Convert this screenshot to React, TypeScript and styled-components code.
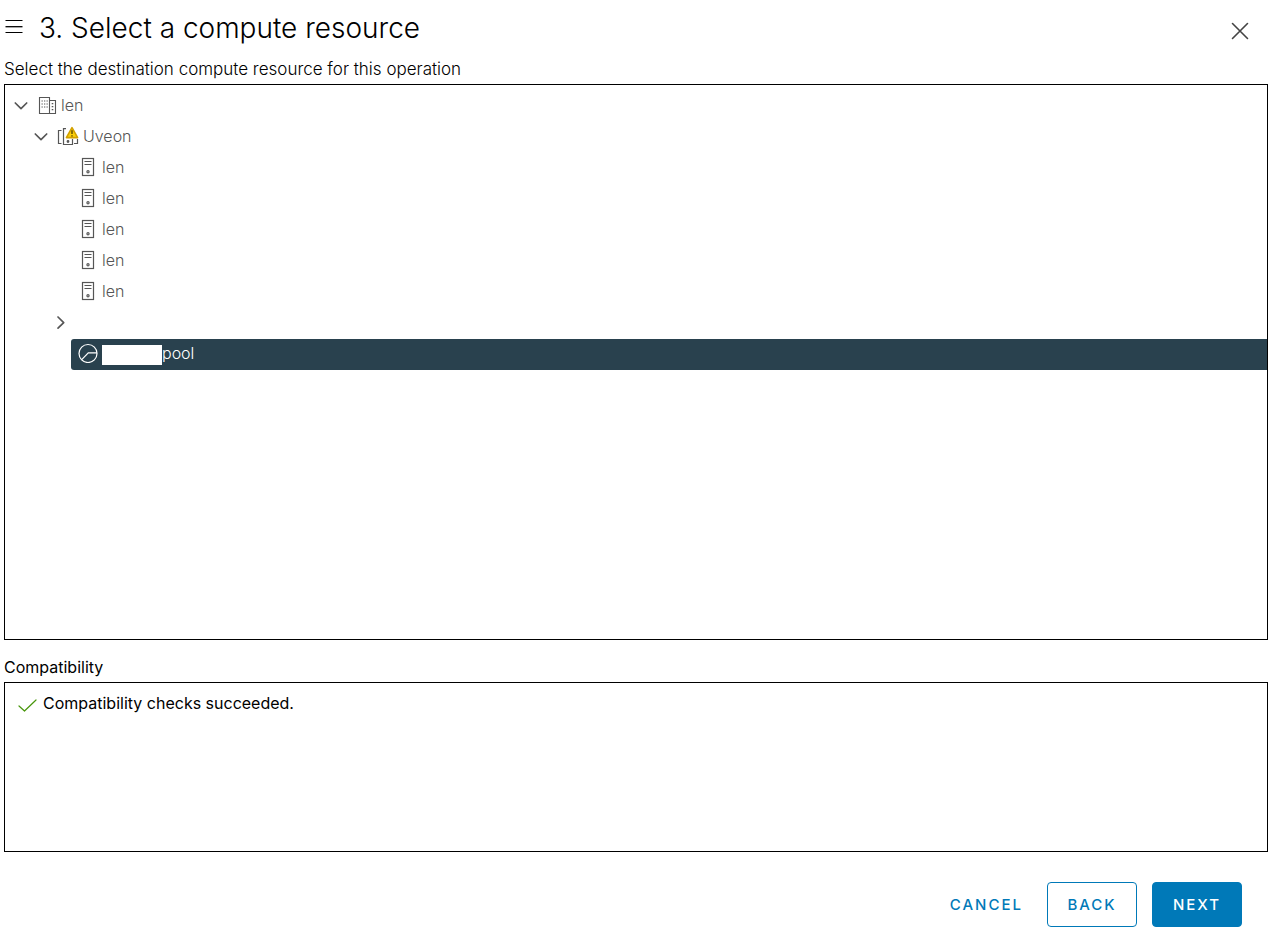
import React from "react";
import styled, { createGlobalStyle, css } from "styled-components";

const GlobalStyle = createGlobalStyle`
  *, *::before, *::after { box-sizing: border-box; }
  body {
    margin: 0;
    background: #fff;
    color: #000;
    font-family: Inter, "Liberation Sans", sans-serif;
    font-size: 16px;
    line-height: 24px;
  }
  svg { display: block; flex: none; }
`;

const Page = styled.main`
  display: flex;
  flex-direction: column;
  min-height: 100vh;
  padding: 8px 3px 6px 4px;
`;

const Header = styled.header`
  display: flex;
  align-items: center;
  gap: 15px;
  height: 40px;
  padding-right: 18px;
`;

const IconButton = styled.button`
  display: flex;
  align-items: center;
  justify-content: center;
  width: 20px;
  height: 20px;
  padding: 0;
  border: 0;
  background: none;
  color: #000;
  cursor: pointer;
`;

const CloseButton = styled(IconButton)`
  height: 24px;
  color: #444;
`;

const Title = styled.h1`
  flex: 1;
  margin: 0;
  font-size: 28px;
  font-weight: 300;
  line-height: 40px;
`;

const Label = styled.h2`
  margin: 0;
  padding: 9px 0 3px;
  font-size: 16px;
  font-weight: 400;
  line-height: 24px;
`;

const Intro = styled.p`
  margin: 0;
  padding: 9px 0 3px;
  font-size: 17px;
  font-weight: 300;
  line-height: 24px;
`;

const Panel = styled.section<{ $grow?: boolean }>`
  border: 1px solid #000;
  ${(p) =>
    p.$grow
      ? css`
          flex: 1;
          padding: 6px 0 6px 7px;
          margin-bottom: 6px;
        `
      : css`
          min-height: 170px;
          padding: 8px 12px;
        `}
`;

const Tree = styled.ul`
  margin: 0;
  padding: 0;
  list-style: none;
`;

const Branch = styled.ul`
  margin: 0;
  padding: 0 0 0 20px;
  list-style: none;
`;

const Row = styled.div`
  display: flex;
  align-items: center;
  height: 31px;
  color: #565656;
`;

const Toggle = styled(IconButton)`
  width: 18px;
  color: #565656;
`;

const Spacer = styled.span`
  width: 19px;
`;

const Node = styled.span<{ $selected?: boolean }>`
  display: flex;
  flex: 1;
  align-items: center;
  gap: 4px;
  height: 31px;
  padding: 0 0 3px 7px;
  border-radius: 3px 0 0 3px;
  ${(p) =>
    p.$selected &&
    css`
      background: #29414e;
      color: #fff;
    `}
`;

const NodeName = styled.span`
  font-weight: 300;
`;

const Redaction = styled.span`
  width: 60px;
  height: 20px;
  margin: 3px -4px 0 0;
  background: #fff;
`;

const Status = styled.p`
  display: flex;
  align-items: center;
  gap: 5px;
  margin: 0;
`;

const Footer = styled.footer`
  display: flex;
  justify-content: flex-end;
  gap: 15px;
  padding: 30px 26px 0 0;
`;

const Button = styled.button<{ $kind: "link" | "outline" | "solid" }>`
  min-width: 90px;
  height: 45px;
  padding: 0 8px;
  border: 1px solid ${(p) => (p.$kind === "link" ? "transparent" : "#0079b8")};
  border-radius: 4px;
  background: ${(p) => (p.$kind === "solid" ? "#0079b8" : "transparent")};
  color: ${(p) => (p.$kind === "solid" ? "#fff" : "#0079b8")};
  font: 500 15px/20px Inter, "Liberation Sans", sans-serif;
  letter-spacing: 2px;
  cursor: pointer;
`;

const MenuIcon = () => (
  <svg width="20" height="20" viewBox="0 0 20 20" stroke="currentColor" fill="none">
    <path d="M1.5 2.5H18.5M1.5 14.5H18.5" strokeWidth="1.1" />
    <path d="M1.5 8.7H18.5" strokeWidth="1.3" />
  </svg>
);

const CloseIcon = () => (
  <svg width="20" height="24" viewBox="0 0 20 24" stroke="currentColor" strokeWidth="1.6" strokeLinecap="round">
    <path d="M2.5 7.5 17.5 22.5M17.5 7.5 2.5 22.5" />
  </svg>
);

const Chevron = ({ open }: { open: boolean }) => (
  <svg width="18" height="18" viewBox="0 0 18 18" stroke="currentColor" fill="none" strokeWidth="1.7" strokeLinecap="round" strokeLinejoin="round">
    <path d={open ? "M3.3 5 9 10.6 14.7 5" : "M6 2 11.7 7.6 6 13.2"} />
  </svg>
);

const DatacenterIcon = () => (
  <svg width="20" height="20" viewBox="0 0 20 20" stroke="currentColor" fill="none" strokeWidth="1.1">
    <path d="M2.5 18.5V2.5H12.5V18.5ZM12.5 5.5H18.5V18.5H12.5" />
    <path d="M4.5 6H11M4.5 9H11M4.5 12H11" strokeDasharray="1.3 1.2" />
    <path d="M15.5 8V16.5" strokeWidth="1.6" strokeDasharray="1.3 1.7" />
  </svg>
);

const ClusterIcon = () => (
  <svg width="22" height="20" viewBox="0 0 22 20" stroke="currentColor" fill="none" strokeWidth="1.2">
    <path d="M4.5 4.5H1.5V17.5H4.5M9 2.6H6.5V18.5H15.5V13M17 17.5H20.5V13" />
    <circle cx="11" cy="15.5" r=".8" fill="currentColor" />
    <path d="M15 1.6 20.6 11.6H9.4Z" fill="#fdd008" stroke="#d2a000" strokeWidth="1.6" strokeLinejoin="round" />
    <path d="M15 4.2V8M15 9.3V10.6" stroke="#5a4700" strokeWidth="1.4" />
  </svg>
);

const HostIcon = () => (
  <svg width="20" height="20" viewBox="0 0 20 20" stroke="currentColor" fill="none" strokeWidth="1.2">
    <rect x="4.5" y="1.5" width="11" height="17" />
    <path d="M6.5 4.5H13.5M6.5 7.5H13.5" />
    <circle cx="10" cy="14.8" r="1.1" />
  </svg>
);

const PoolIcon = () => (
  <svg width="20" height="20" viewBox="0 0 20 20" stroke="currentColor" fill="none" strokeWidth="1.2">
    <circle cx="10" cy="10.5" r="9" />
    <path d="M3.7 16.7 10.3 9.8H19" />
  </svg>
);

const CheckIcon = () => (
  <svg width="21" height="20" viewBox="0 0 21 20" stroke="#48960c" fill="none" strokeWidth="1.2" strokeLinecap="round" strokeLinejoin="round">
    <path d="M2 13 7.5 18 19 7" />
  </svg>
);

const hosts = ["len", "len", "len", "len", "len"];

export default function App() {
  return (
    <Page>
      <GlobalStyle />
      <Header>
        <IconButton type="button" aria-label="Steps">
          <MenuIcon />
        </IconButton>
        <Title>3. Select a compute resource</Title>
        <CloseButton type="button" aria-label="Close">
          <CloseIcon />
        </CloseButton>
      </Header>
      <Intro>Select the destination compute resource for this operation</Intro>
      <Panel $grow>
        <Tree>
          <li>
            <Row>
              <Toggle type="button" aria-label="Collapse len" aria-expanded="true">
                <Chevron open />
              </Toggle>
              <Node>
                <DatacenterIcon />
                <NodeName>len</NodeName>
              </Node>
            </Row>
            <Branch>
              <li>
                <Row>
                  <Toggle type="button" aria-label="Collapse Uveon" aria-expanded="true">
                    <Chevron open />
                  </Toggle>
                  <Node>
                    <ClusterIcon />
                    <NodeName>Uveon</NodeName>
                  </Node>
                </Row>
                <Branch>
                  {hosts.map((name, i) => (
                    <li key={i}>
                      <Row>
                        <Spacer />
                        <Node>
                          <HostIcon />
                          <NodeName>{name}</NodeName>
                        </Node>
                      </Row>
                    </li>
                  ))}
                  <li>
                    <Row>
                      <Toggle type="button" aria-label="Expand" aria-expanded="false">
                        <Chevron open={false} />
                      </Toggle>
                    </Row>
                  </li>
                  <li>
                    <Row>
                      <Spacer />
                      <Node $selected>
                        <PoolIcon />
                        <Redaction />
                        <NodeName>pool</NodeName>
                      </Node>
                    </Row>
                  </li>
                </Branch>
              </li>
            </Branch>
          </li>
        </Tree>
      </Panel>
      <Label>Compatibility</Label>
      <Panel>
        <Status>
          <CheckIcon />
          Compatibility checks succeeded.
        </Status>
      </Panel>
      <Footer>
        <Button type="button" $kind="link">CANCEL</Button>
        <Button type="button" $kind="outline">BACK</Button>
        <Button type="button" $kind="solid">NEXT</Button>
      </Footer>
    </Page>
  );
}
